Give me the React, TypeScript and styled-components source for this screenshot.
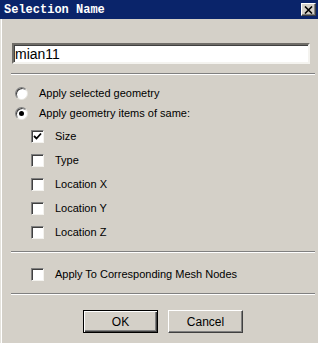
import React from "react";
import styled, { createGlobalStyle } from "styled-components";

const Global = createGlobalStyle`
  html, body { margin: 0; padding: 0; background: #d4d0c8; }
  body { font-family: "Liberation Sans", Arial, sans-serif; }
`;

const Window = styled.div`
  width: 318px;
  height: 343px;
  background: #d4d0c8;
  display: flex;
  flex-direction: column;
  overflow: hidden;
`;

const TitleBar = styled.div`
  height: 19px;
  background: #0a246a;
  display: flex;
  align-items: center;
  justify-content: space-between;
  padding: 0 2px 0 4px;
  box-sizing: border-box;
`;

const Title = styled.span`
  font-family: "Liberation Mono", "DejaVu Sans Mono", monospace;
  font-weight: bold;
  font-size: 12px;
  color: #ffffff;
  letter-spacing: 0;
`;

const CloseButton = styled.div`
  width: 15px;
  height: 13px;
  background: #d4d0c8;
  box-sizing: border-box;
  border: 1px solid;
  border-color: #ffffff #404040 #404040 #ffffff;
  box-shadow: inset -1px -1px #808080;
  display: flex;
  align-items: center;
  justify-content: center;
`;

const Body = styled.div`
  flex: 1;
  display: flex;
  flex-direction: column;
  padding: 24px 3px 0 11px;
  box-shadow: inset 1px 0 #e4e2dc, inset 2px 0 #ffffff;
`;

const NameInput = styled.div`
  margin-left: 1px;
  width: 298px;
  height: 21px;
  box-sizing: border-box;
  background: #ffffff;
  border: 2px solid;
  border-color: #6f6d68 #f4f3ef #f4f3ef #6f6d68;
  box-shadow: inset 1px 1px #404040;
  display: flex;
  align-items: center;
  padding-left: 1px;
  font-size: 14px;
  color: #000;
`;

const Separator = styled.div<{ $top: number }>`
  margin-top: ${(p) => p.$top}px;
  height: 1px;
  background: #808080;
  border-bottom: 1px solid #ffffff;
`;

const Group = styled.div<{ $top: number }>`
  margin-top: ${(p) => p.$top}px;
  display: flex;
  flex-direction: column;
`;

const Row = styled.div<{ $h: number; $indent: number }>`
  height: ${(p) => p.$h}px;
  display: flex;
  align-items: center;
  gap: 11px;
  padding-left: ${(p) => p.$indent}px;
  font-size: 11px;
  color: #000;
`;

const RadioCircle = styled.div<{ $on?: boolean }>`
  width: 13px;
  height: 13px;
  flex: none;
  border-radius: 50%;
  box-sizing: border-box;
  background: #ffffff;
  border: 1px solid;
  border-color: #808080 #e8e6e0 #e8e6e0 #808080;
  box-shadow: inset 1px 1px #404040;
  display: flex;
  align-items: center;
  justify-content: center;
  &::after {
    content: "";
    display: ${(p) => (p.$on ? "block" : "none")};
    width: 5px;
    height: 5px;
    border-radius: 50%;
    background: #000;
  }
`;

const CheckBox = styled.div`
  width: 13px;
  height: 13px;
  flex: none;
  box-sizing: border-box;
  background: #ffffff;
  border: 1px solid;
  border-color: #808080 #f4f3ef #f4f3ef #808080;
  box-shadow: inset 1px 1px #404040;
  display: flex;
  align-items: center;
  justify-content: center;
`;

const Buttons = styled.div`
  margin-top: 15px;
  display: flex;
  justify-content: center;
  gap: 10px;
`;

const Button = styled.div<{ $default?: boolean }>`
  width: 75px;
  height: 23px;
  box-sizing: border-box;
  background: #d4d0c8;
  display: flex;
  align-items: center;
  justify-content: center;
  font-size: 12px;
  color: #000;
  border: 1px solid;
  border-color: ${(p) => (p.$default ? "#000" : "#ffffff #404040 #404040 #ffffff")};
  box-shadow: ${(p) =>
    p.$default
      ? "inset 1px 1px #ffffff, inset -1px -1px #404040, inset -2px -2px #808080"
      : "inset -1px -1px #808080"};
`;

const Check = () => (
  <svg width="9" height="9" viewBox="0 0 9 9">
    <path d="M1 4 L3.5 6.5 L8 1.5" stroke="#000" strokeWidth="1.8" fill="none" />
  </svg>
);

const CloseX = () => (
  <svg width="9" height="8" viewBox="0 0 9 8">
    <path d="M1 0.5 L8 7.5 M8 0.5 L1 7.5" stroke="#000" strokeWidth="1.6" fill="none" />
  </svg>
);

const items = [
  { label: "Size", checked: true },
  { label: "Type", checked: false },
  { label: "Location X", checked: false },
  { label: "Location Y", checked: false },
  { label: "Location Z", checked: false },
];

export default function App() {
  return (
    <>
      <Global />
      <Window>
        <TitleBar>
          <Title>Selection Name</Title>
          <CloseButton>
            <CloseX />
          </CloseButton>
        </TitleBar>
        <Body>
          <NameInput>mian11</NameInput>
          <Separator $top={9} />
          <Group $top={8}>
            <Row $h={20} $indent={4}>
              <RadioCircle />
              <span>Apply selected geometry</span>
            </Row>
            <Row $h={20} $indent={4}>
              <RadioCircle $on />
              <span>Apply geometry items of same:</span>
            </Row>
          </Group>
          <Group $top={1}>
            {items.map((it) => (
              <Row key={it.label} $h={24} $indent={20}>
                <CheckBox>{it.checked && <Check />}</CheckBox>
                <span>{it.label}</span>
              </Row>
            ))}
          </Group>
          <Separator $top={7} />
          <Group $top={9}>
            <Row $h={24} $indent={20}>
              <CheckBox />
              <span>Apply To Corresponding Mesh Nodes</span>
            </Row>
          </Group>
          <Separator $top={7} />
          <Buttons>
            <Button $default>OK</Button>
            <Button>Cancel</Button>
          </Buttons>
        </Body>
      </Window>
    </>
  );
}
